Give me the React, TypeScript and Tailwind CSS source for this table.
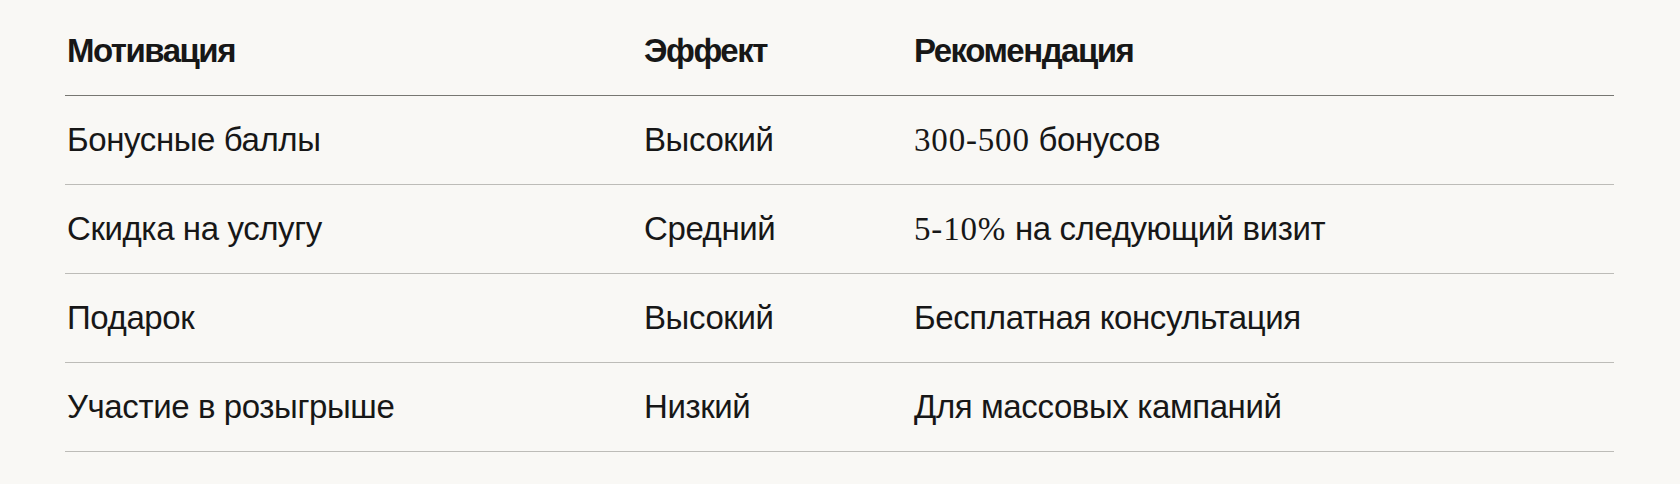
import React from "react";

const num = "font-['Liberation_Serif',serif] text-[33px] tracking-[0.025em]";

const rows: [string, string, React.ReactNode][] = [
  [
    "Бонусные баллы",
    "Высокий",
    <>
      <span className={num}>300-500</span> бонусов
    </>,
  ],
  [
    "Скидка на услугу",
    "Средний",
    <>
      <span className={num}>5-10%</span> на следующий визит
    </>,
  ],
  ["Подарок", "Высокий", "Бесплатная консультация"],
  ["Участие в розыгрыше", "Низкий", "Для массовых кампаний"],
];

export default function App() {
  return (
    <div className="min-h-[484px] w-full bg-[#f9f8f5] text-[#171717] font-['Liberation_Sans',Arial,sans-serif]">
      <div className="ml-[65px] w-[1549px]">
        <div className="grid grid-cols-[579px_270px_1fr] border-b border-[#777772] pt-[27px] pb-[20px] text-[33px] leading-[48px] font-bold tracking-[-0.045em]">
          <div className="pl-[2px]">Мотивация</div>
          <div>Эффект</div>
          <div>Рекомендация</div>
        </div>
        {rows.map((r, i) => (
          <div
            key={i}
            className="grid grid-cols-[579px_270px_1fr] border-b border-[#bdbcb8] py-5 text-[33px] leading-[48px] tracking-[-0.012em]"
          >
            <div className="pl-[2px]">{r[0]}</div>
            <div>{r[1]}</div>
            <div>{r[2]}</div>
          </div>
        ))}
      </div>
    </div>
  );
}
